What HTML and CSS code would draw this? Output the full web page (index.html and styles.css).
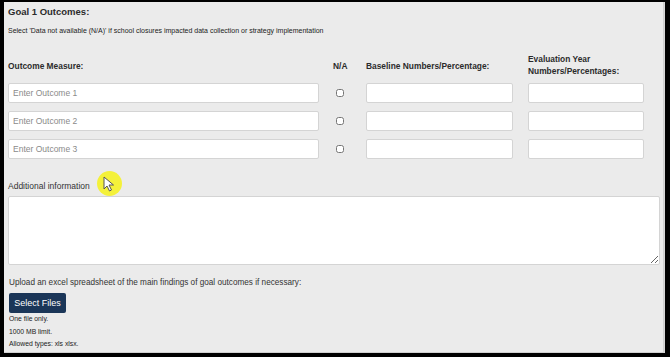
FILE: index.html
```html
<!DOCTYPE html>
<html lang="en">
<head>
    <meta charset="UTF-8">
    <meta name="viewport" content="width=device-width, initial-scale=1.0">
    <title>Goal 1 Outcomes</title>
    <link rel="stylesheet" href="styles.css">
</head>
<body>

    <div class="frame">
        <div class="panel">
            <h3>Goal 1 Outcomes:</h3>
            <p class="hint">Select 'Data not available (N/A)' if school closures impacted data collection or strategy implementation</p>

            <div class="grid">
                <div class="head">Outcome Measure:</div>
                <div class="head na">N/A</div>
                <div class="head">Baseline Numbers/Percentage:</div>
                <div class="head">Evaluation Year Numbers/Percentages:</div>

                <input type="text" placeholder="Enter Outcome 1">
                <div class="check"><input type="checkbox"></div>
                <input type="text">
                <input type="text">

                <input type="text" placeholder="Enter Outcome 2">
                <div class="check"><input type="checkbox"></div>
                <input type="text">
                <input type="text">

                <input type="text" placeholder="Enter Outcome 3">
                <div class="check"><input type="checkbox"></div>
                <input type="text">
                <input type="text">
            </div>

            <label class="label">Additional information</label>
            <textarea></textarea>

            <p class="upload">Upload an excel spreadsheet of the main findings of goal outcomes if necessary:</p>
            <button>Select Files</button>
            <p class="small">One file only.</p>
            <p class="small">1000 MB limit.</p>
            <p class="small">Allowed types: xls xlsx.</p>
        </div>

        <!-- markering av musepeker -->
        <div class="cursor">
            <svg width="14" height="16" viewBox="0 0 14 16">
                <path d="M1 1 L1 13 L4 10 L6.5 15 L8.5 14 L6 9 L10.5 9 Z" fill="#fff" stroke="#555" stroke-width="1"/>
            </svg>
        </div>
    </div>

</body>
</html>
```

FILE: styles.css
```css
body {
    margin: 0;
    font-family: "Liberation Sans", Arial, sans-serif;
    color: #222;
    background-color: #fff;
}
.frame {
    position: relative;
    width: 670px;
    height: 357px;
    box-sizing: border-box;
    border-top: 2px solid #000;
    border-left: 4px solid #000;
    border-right: 5px solid #000;
    border-bottom: 4px solid #000;
    background-color: #d6d6d6;
}
.panel {
    height: 100%;
    box-sizing: border-box;
    margin: 0 1px 1px 0;
    background-color: #ebebeb;
    padding: 4px 5px 0 4px;
    border-right: 1px solid #d0d0d0;
    border-bottom: 1px solid #d0d0d0;
}
h3 {
    font-size: 9.5px;
    margin: 0;
    line-height: 12px;
    color: #2b2b2b;
}
.hint {
    font-size: 7px;
    margin: 8px 0 0;
    line-height: 10px;
    color: #222;
}
.grid {
    display: grid;
    grid-template-columns: 311px 47px 147px 116px;
    row-gap: 8px;
    margin-top: 17px;
}
.grid input[type="text"] {
    height: 20px;
}
.grid > :nth-child(4n) {
    margin-left: 15px;
}
.head {
    font-size: 8.4px;
    font-weight: bold;
    color: #2b2b2b;
    align-self: end;
    line-height: 12px;
    margin-bottom: -2px;
}
.head:nth-child(1),
.head:nth-child(2),
.head:nth-child(3) {
    margin-bottom: 3px;
}
.na {
    padding-left: 14px;
}
.check {
    display: flex;
    align-items: center;
    padding-left: 17px;
}
input[type="text"] {
    box-sizing: border-box;
    border: 1px solid #d4d4d4;
    border-radius: 2px;
    background-color: #fff;
    font-family: inherit;
    font-size: 8.5px;
    padding: 0 4px;
    width: 100%;
}
input::placeholder {
    color: #8a8a8a;
}
input[type="checkbox"] {
    width: 8px;
    height: 8px;
    margin: 0;
}
.label {
    display: block;
    font-size: 8.5px;
    margin-top: 21px;
    line-height: 12px;
    color: #333;
}
textarea {
    display: block;
    box-sizing: border-box;
    width: 652px;
    height: 69px;
    margin-top: 4px;
    border: 1px solid #d4d4d4;
    border-radius: 2px;
    background-color: #fff;
    resize: vertical;
}
.upload {
    font-size: 8.2px;
    margin: 12px 0 0 1px;
    line-height: 12px;
    color: #333;
}
button {
    margin: 4px 0 0 1px;
    width: 57px;
    height: 20px;
    border: none;
    border-radius: 2px;
    background-color: #1b3658;
    color: #fff;
    font-family: inherit;
    font-size: 9px;
    padding: 0;
}
.small {
    font-size: 6.8px;
    margin: 0 0 0 1px;
    line-height: 12.5px;
    color: #222;
}
.cursor {
    position: absolute;
    left: 93px;
    top: 169px;
    width: 25px;
    height: 25px;
    border-radius: 50%;
    background-color: #f4f13a;
}
.cursor svg {
    position: absolute;
    left: 6px;
    top: 5px;
}
```
